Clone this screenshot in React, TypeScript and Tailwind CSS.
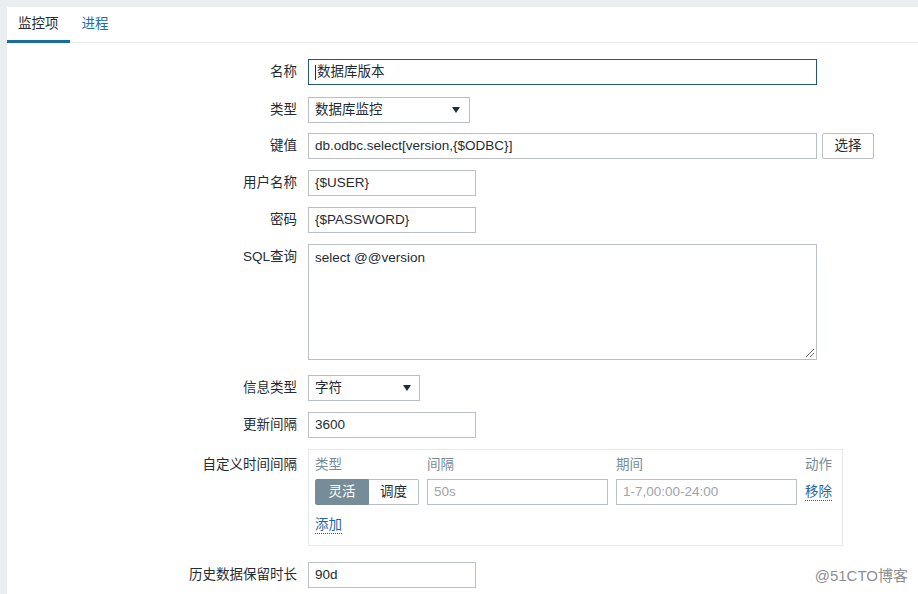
import type { ReactNode } from "react";

const fieldBase =
  "h-[26px] border bg-white px-[6px] flex items-center text-[#1f2c33] whitespace-nowrap";
const inputBox = `${fieldBase} border-[#b9bfc3]`;

function Row({
  label,
  children,
  className = "",
  top = false,
}: {
  label: string;
  children: ReactNode;
  className?: string;
  top?: boolean;
}) {
  return (
    <div className={`flex ${top ? "items-start" : "items-center"} ${className}`}>
      <div
        className={`w-[290px] shrink-0 text-right text-[#1f2c33] ${top ? "leading-[26px]" : ""}`}
      >
        {label}
      </div>
      <div className="ml-[11px] flex items-center">{children}</div>
    </div>
  );
}

function Arrow() {
  return (
    <svg width="8" height="6" viewBox="0 0 8 6" className="shrink-0">
      <path d="M0 0 L8 0 L4 6 Z" fill="#1f2c33" />
    </svg>
  );
}

export default function App() {
  return (
    <div className="w-[918px] h-[594px] bg-[#ebeef0] pt-[7px] pl-[7px] overflow-hidden relative font-['Liberation_Sans','Noto_Sans_CJK_SC',sans-serif] text-[13.5px]">
      <div className="bg-white h-full">
        {/* tabs */}
        <div className="flex h-[36px] border-b border-[#e3e7e9]">
          <div className="px-[11px] flex items-center text-[#1f2c33] border-b-[3px] border-[#1a6e9c] -mb-px pt-[2px]">
            监控项
          </div>
          <div className="px-[12px] flex items-center text-[#1f6fa6] pb-[1px]">
            进程
          </div>
        </div>

        <Row label="名称" className="mt-[16px]">
          <div className={`${fieldBase} w-[509px] border-[#24587a]`}>
            <span className="w-px h-[15px] bg-[#1f2c33] mr-px" />
            数据库版本
          </div>
        </Row>

        <Row label="类型" className="mt-[12px]">
          <div className={`${inputBox} w-[162px] justify-between pr-[9px]`}>
            <span>数据库监控</span>
            <Arrow />
          </div>
        </Row>

        <Row label="键值" className="mt-[10px]">
          <div className={`${inputBox} w-[509px]`}>db.odbc.select[version,{"{$ODBC}"}]</div>
          <button className="ml-[5px] h-[26px] w-[52px] border border-[#b9bfc3] rounded-[2px] bg-white text-[#1f2c33]">
            选择
          </button>
        </Row>

        <Row label="用户名称" className="mt-[11px]">
          <div className={`${inputBox} w-[168px]`}>{"{$USER}"}</div>
        </Row>

        <Row label="密码" className="mt-[11px]">
          <div className={`${inputBox} w-[168px]`}>{"{$PASSWORD}"}</div>
        </Row>

        <Row label="SQL查询" className="mt-[11px]" top>
          <div className="relative h-[116px] w-[509px] border border-[#b9bfc3] bg-white px-[6px] py-[4px] leading-[17px] text-[#1f2c33]">
            select @@version
            <svg width="11" height="11" viewBox="0 0 11 11" className="absolute right-[1px] bottom-[1px]">
              <path d="M10 2 L2 10 M10 6 L6 10" stroke="#6b6b6b" strokeWidth="1" />
            </svg>
          </div>
        </Row>

        <Row label="信息类型" className="mt-[15px]">
          <div className={`${inputBox} w-[112px] justify-between pr-[8px]`}>
            <span>字符</span>
            <Arrow />
          </div>
        </Row>

        <Row label="更新间隔" className="mt-[11px]">
          <div className={`${inputBox} w-[168px]`}>3600</div>
        </Row>

        <div className="flex items-start mt-[11px]">
          <div className="w-[290px] shrink-0 text-right text-[#1f2c33] pt-[6px] leading-[20px]">
            自定义时间间隔
          </div>
          <div className="ml-[11px] w-[535px] border border-[#e6e9eb] px-[6px] pt-[5px] pb-[10px]">
            <div className="grid grid-cols-[104px_181px_181px_auto] gap-x-[8px]">
              <div className="leading-[20px] text-[#768d99]">类型</div>
              <div className="leading-[20px] text-[#768d99]">间隔</div>
              <div className="leading-[20px] text-[#768d99]">期间</div>
              <div className="leading-[20px] text-[#768d99]">动作</div>

              <div className="flex mt-[4px] h-[26px]">
                <div className="w-[54px] flex items-center justify-center bg-[#768d99] border border-[#768d99] text-white rounded-l-[2px]">
                  灵活
                </div>
                <div className="w-[50px] flex items-center justify-center bg-white border border-[#b9bfc3] border-l-0 text-[#1f2c33] rounded-r-[2px]">
                  调度
                </div>
              </div>
              <div className={`${fieldBase} border-[#b9bfc3] mt-[4px] text-[#9da5aa]`}>50s</div>
              <div className={`${fieldBase} border-[#b9bfc3] mt-[4px] text-[#9da5aa]`}>1-7,00:00-24:00</div>
              <div className="mt-[4px] h-[26px] flex items-center">
                <span className="text-[#1f65a6] border-b border-dotted border-[#1f65a6] leading-[16px]">
                  移除
                </span>
              </div>
            </div>
            <div className="mt-[10px] h-[20px] flex items-center">
              <span className="text-[#1f65a6] border-b border-dotted border-[#1f65a6] leading-[16px]">
                添加
              </span>
            </div>
          </div>
        </div>

        <Row label="历史数据保留时长" className="mt-[16px]">
          <div className={`${inputBox} w-[168px]`}>90d</div>
        </Row>
      </div>

      <div className="absolute right-[10px] bottom-[7px] text-[15px] text-[#8f8f8f] font-['Liberation_Sans','Noto_Sans_CJK_SC',sans-serif]">
        @51CTO博客
      </div>
    </div>
  );
}
